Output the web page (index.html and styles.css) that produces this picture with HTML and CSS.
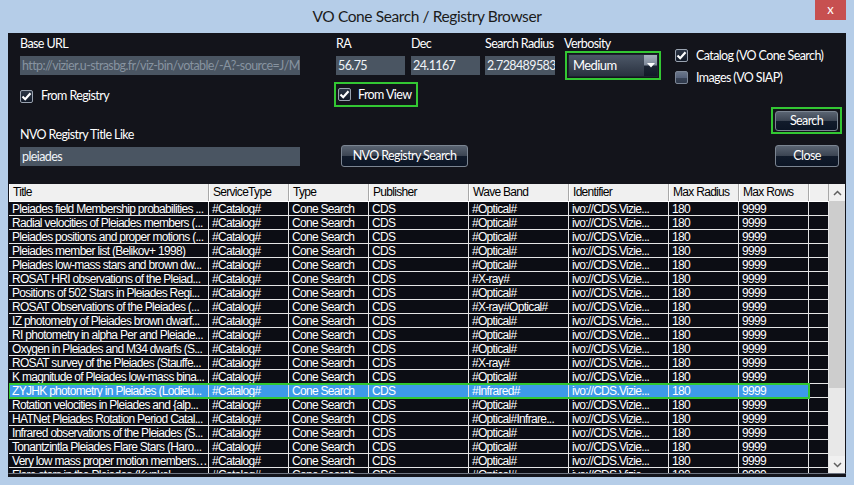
FILE: index.html
```html
<!DOCTYPE html>
<html>
<head>
<meta charset="utf-8">
<title>VO Cone Search / Registry Browser</title>
<link rel="stylesheet" href="styles.css">
</head>
<body>
<div class="window">
  <div class="titlebar">
    <div class="title">VO Cone Search / Registry Browser</div>
    <div class="close">x</div>
  </div>
  <div class="client">
    <div class="form">
      <div class="col-left">
        <div class="lbl">Base URL</div>
        <div class="input disabled">http://vizier.u-strasbg.fr/viz-bin/votable/-A?-source=J/MNRAS/433/3311</div>
        <div class="check reg-check">
          <span class="box checked"><svg width="13" height="13" viewBox="0 0 13 13"><polyline points="2.5,6.5 5.2,9.2 10.5,3.2" fill="none" stroke="#fff" stroke-width="2.2"/></svg></span>
          <span class="lbl">From Registry</span>
        </div>
        <div class="lbl title-like">NVO Registry Title Like</div>
        <div class="input">pleiades</div>
      </div>
      <div class="col-mid">
        <div class="fields">
          <div class="field f-ra"><div class="lbl">RA</div><div class="input">56.75</div></div>
          <div class="field f-dec"><div class="lbl">Dec</div><div class="input">24.1167</div></div>
          <div class="field f-sr"><div class="lbl">Search Radius</div><div class="input">2.72848958333333</div></div>
          <div class="field f-verb">
            <div class="lbl">Verbosity</div>
            <div class="hl verb-hl">
              <div class="dropdown"><span class="dd-text">Medium</span><span class="dd-arrow"><svg width="8" height="5" viewBox="0 0 8 5"><polygon points="0,0 8,0 4,4.5" fill="#fff"/></svg></span></div>
            </div>
          </div>
        </div>
        <div class="hl fv-hl">
          <span class="box checked"><svg width="13" height="13" viewBox="0 0 13 13"><polyline points="2.5,6.5 5.2,9.2 10.5,3.2" fill="none" stroke="#fff" stroke-width="2.2"/></svg></span>
          <span class="lbl">From View</span>
        </div>
        <div class="btn nvo-btn">NVO Registry Search</div>
      </div>
      <div class="col-right">
        <div class="check">
          <span class="box checked"><svg width="13" height="13" viewBox="0 0 13 13"><polyline points="2.5,6.5 5.2,9.2 10.5,3.2" fill="none" stroke="#fff" stroke-width="2.2"/></svg></span>
          <span class="lbl">Catalog (VO Cone Search)</span>
        </div>
        <div class="check img-check">
          <span class="box unchecked"></span>
          <span class="lbl">Images (VO SIAP)</span>
        </div>
        <div class="hl search-hl"><div class="btn search-btn">Search</div></div>
        <div class="btn close-btn">Close</div>
      </div>
    </div>
    <div class="grid">
      <div class="gridmain">
        <div class="hdr">
          <div class="hcell w200">Title</div>
          <div class="hcell w80">ServiceType</div>
          <div class="hcell w80">Type</div>
          <div class="hcell w100">Publisher</div>
          <div class="hcell w100">Wave Band</div>
          <div class="hcell w100">Identifier</div>
          <div class="hcell w70">Max Radius</div>
          <div class="hcell w70">Max Rows</div>
          <div class="hcell w20"></div>
        </div>
        <div class="rows">
          <div class="row"><div class="cells"><div class="cell w200">Pleiades field Membership probabilities ...</div><div class="cell w80">#Catalog#</div><div class="cell w80">Cone Search</div><div class="cell w100">CDS</div><div class="cell w100">#Optical#</div><div class="cell w100">ivo://CDS.Vizie...</div><div class="cell w70">180</div><div class="cell w70">9999</div></div><div class="cell w20"></div></div>
          <div class="row"><div class="cells"><div class="cell w200">Radial velocities of Pleiades members (...</div><div class="cell w80">#Catalog#</div><div class="cell w80">Cone Search</div><div class="cell w100">CDS</div><div class="cell w100">#Optical#</div><div class="cell w100">ivo://CDS.Vizie...</div><div class="cell w70">180</div><div class="cell w70">9999</div></div><div class="cell w20"></div></div>
          <div class="row"><div class="cells"><div class="cell w200">Pleiades positions and proper motions (...</div><div class="cell w80">#Catalog#</div><div class="cell w80">Cone Search</div><div class="cell w100">CDS</div><div class="cell w100">#Optical#</div><div class="cell w100">ivo://CDS.Vizie...</div><div class="cell w70">180</div><div class="cell w70">9999</div></div><div class="cell w20"></div></div>
          <div class="row"><div class="cells"><div class="cell w200">Pleiades member list (Belikov+ 1998)</div><div class="cell w80">#Catalog#</div><div class="cell w80">Cone Search</div><div class="cell w100">CDS</div><div class="cell w100">#Optical#</div><div class="cell w100">ivo://CDS.Vizie...</div><div class="cell w70">180</div><div class="cell w70">9999</div></div><div class="cell w20"></div></div>
          <div class="row"><div class="cells"><div class="cell w200">Pleiades low-mass stars and brown dw...</div><div class="cell w80">#Catalog#</div><div class="cell w80">Cone Search</div><div class="cell w100">CDS</div><div class="cell w100">#Optical#</div><div class="cell w100">ivo://CDS.Vizie...</div><div class="cell w70">180</div><div class="cell w70">9999</div></div><div class="cell w20"></div></div>
          <div class="row"><div class="cells"><div class="cell w200">ROSAT HRI observations of the Pleiad...</div><div class="cell w80">#Catalog#</div><div class="cell w80">Cone Search</div><div class="cell w100">CDS</div><div class="cell w100">#X-ray#</div><div class="cell w100">ivo://CDS.Vizie...</div><div class="cell w70">180</div><div class="cell w70">9999</div></div><div class="cell w20"></div></div>
          <div class="row"><div class="cells"><div class="cell w200">Positions of 502 Stars in Pleiades Regi...</div><div class="cell w80">#Catalog#</div><div class="cell w80">Cone Search</div><div class="cell w100">CDS</div><div class="cell w100">#Optical#</div><div class="cell w100">ivo://CDS.Vizie...</div><div class="cell w70">180</div><div class="cell w70">9999</div></div><div class="cell w20"></div></div>
          <div class="row"><div class="cells"><div class="cell w200">ROSAT Observations of the Pleiades (...</div><div class="cell w80">#Catalog#</div><div class="cell w80">Cone Search</div><div class="cell w100">CDS</div><div class="cell w100">#X-ray#Optical#</div><div class="cell w100">ivo://CDS.Vizie...</div><div class="cell w70">180</div><div class="cell w70">9999</div></div><div class="cell w20"></div></div>
          <div class="row"><div class="cells"><div class="cell w200">IZ photometry of Pleiades brown dwarf...</div><div class="cell w80">#Catalog#</div><div class="cell w80">Cone Search</div><div class="cell w100">CDS</div><div class="cell w100">#Optical#</div><div class="cell w100">ivo://CDS.Vizie...</div><div class="cell w70">180</div><div class="cell w70">9999</div></div><div class="cell w20"></div></div>
          <div class="row"><div class="cells"><div class="cell w200">RI photometry in alpha Per and Pleiade...</div><div class="cell w80">#Catalog#</div><div class="cell w80">Cone Search</div><div class="cell w100">CDS</div><div class="cell w100">#Optical#</div><div class="cell w100">ivo://CDS.Vizie...</div><div class="cell w70">180</div><div class="cell w70">9999</div></div><div class="cell w20"></div></div>
          <div class="row"><div class="cells"><div class="cell w200">Oxygen in Pleiades and M34 dwarfs (S...</div><div class="cell w80">#Catalog#</div><div class="cell w80">Cone Search</div><div class="cell w100">CDS</div><div class="cell w100">#Optical#</div><div class="cell w100">ivo://CDS.Vizie...</div><div class="cell w70">180</div><div class="cell w70">9999</div></div><div class="cell w20"></div></div>
          <div class="row"><div class="cells"><div class="cell w200">ROSAT survey of the Pleiades (Stauffe...</div><div class="cell w80">#Catalog#</div><div class="cell w80">Cone Search</div><div class="cell w100">CDS</div><div class="cell w100">#X-ray#</div><div class="cell w100">ivo://CDS.Vizie...</div><div class="cell w70">180</div><div class="cell w70">9999</div></div><div class="cell w20"></div></div>
          <div class="row"><div class="cells"><div class="cell w200">K magnitude of Pleiades low-mass bina...</div><div class="cell w80">#Catalog#</div><div class="cell w80">Cone Search</div><div class="cell w100">CDS</div><div class="cell w100">#Optical#</div><div class="cell w100">ivo://CDS.Vizie...</div><div class="cell w70">180</div><div class="cell w70">9999</div></div><div class="cell w20"></div></div>
          <div class="row sel"><div class="cells"><div class="cell w200">ZYJHK photometry in Pleiades (Lodieu...</div><div class="cell w80">#Catalog#</div><div class="cell w80">Cone Search</div><div class="cell w100">CDS</div><div class="cell w100">#Infrared#</div><div class="cell w100">ivo://CDS.Vizie...</div><div class="cell w70">180</div><div class="cell w70">9999</div></div><div class="cell w20"></div></div>
          <div class="row"><div class="cells"><div class="cell w200">Rotation velocities in Pleiades and {alp...</div><div class="cell w80">#Catalog#</div><div class="cell w80">Cone Search</div><div class="cell w100">CDS</div><div class="cell w100">#Optical#</div><div class="cell w100">ivo://CDS.Vizie...</div><div class="cell w70">180</div><div class="cell w70">9999</div></div><div class="cell w20"></div></div>
          <div class="row"><div class="cells"><div class="cell w200">HATNet Pleiades Rotation Period Catal...</div><div class="cell w80">#Catalog#</div><div class="cell w80">Cone Search</div><div class="cell w100">CDS</div><div class="cell w100">#Optical#Infrare...</div><div class="cell w100">ivo://CDS.Vizie...</div><div class="cell w70">180</div><div class="cell w70">9999</div></div><div class="cell w20"></div></div>
          <div class="row"><div class="cells"><div class="cell w200">Infrared observations of the Pleiades (S...</div><div class="cell w80">#Catalog#</div><div class="cell w80">Cone Search</div><div class="cell w100">CDS</div><div class="cell w100">#Optical#</div><div class="cell w100">ivo://CDS.Vizie...</div><div class="cell w70">180</div><div class="cell w70">9999</div></div><div class="cell w20"></div></div>
          <div class="row"><div class="cells"><div class="cell w200">Tonantzintla Pleiades Flare Stars (Haro...</div><div class="cell w80">#Catalog#</div><div class="cell w80">Cone Search</div><div class="cell w100">CDS</div><div class="cell w100">#Optical#</div><div class="cell w100">ivo://CDS.Vizie...</div><div class="cell w70">180</div><div class="cell w70">9999</div></div><div class="cell w20"></div></div>
          <div class="row"><div class="cells"><div class="cell w200">Very low mass proper motion members i...</div><div class="cell w80">#Catalog#</div><div class="cell w80">Cone Search</div><div class="cell w100">CDS</div><div class="cell w100">#Optical#</div><div class="cell w100">ivo://CDS.Vizie...</div><div class="cell w70">180</div><div class="cell w70">9999</div></div><div class="cell w20"></div></div>
          <div class="row"><div class="cells"><div class="cell w200">Flare stars in the Pleiades (Kunkel...</div><div class="cell w80">#Catalog#</div><div class="cell w80">Cone Search</div><div class="cell w100">CDS</div><div class="cell w100">#Optical#</div><div class="cell w100">ivo://CDS.Vizie...</div><div class="cell w70">180</div><div class="cell w70">9999</div></div><div class="cell w20"></div></div>
        </div>
      </div>
      <div class="vscroll">
        <div class="sb-btn"><svg width="9" height="6" viewBox="0 0 9 6"><polyline points="1,5 4.5,1.5 8,5" fill="none" stroke="#606060" stroke-width="1.5"/></svg></div>
        <div class="sb-thumb"></div>
        <div class="sb-track"></div>
        <div class="sb-btn"><svg width="9" height="6" viewBox="0 0 9 6"><polyline points="1,1 4.5,4.5 8,1" fill="none" stroke="#606060" stroke-width="1.5"/></svg></div>
      </div>
    </div>
  </div>
</div>
</body>
</html>
```

FILE: styles.css
```css
* { box-sizing: border-box; }
html, body { margin: 0; padding: 0; }
body {
  width: 854px;
  height: 485px;
  overflow: hidden;
  background: #b5cde8;
  font-family: "Lato", "Liberation Sans", sans-serif;
}
.window {
  width: 854px;
  height: 485px;
  background: #b5cde8;
  display: flex;
  flex-direction: column;
}
.titlebar {
  height: 33px;
  flex: none;
  display: grid;
  grid-template-columns: 1fr auto 1fr;
  align-items: start;
}
.title {
  grid-column: 2;
  font-size: 15.5px;
  letter-spacing: -0.4px;
  line-height: 32px;
  color: #1b1b1b;
}
.close {
  grid-column: 3;
  justify-self: end;
  width: 31px;
  height: 20px;
  margin-right: 8px;
  background: #c75050;
  color: #fff;
  font-size: 13px;
  line-height: 18px;
  text-align: center;
}
.client {
  margin: 0 8px;
  height: 444px;
  flex: none;
  background: #13141b;
  display: flex;
  flex-direction: column;
}
.form {
  height: 151px;
  flex: none;
  display: flex;
  padding-left: 12px;
  letter-spacing: -0.6px;
}
.lbl {
  font-size: 12.5px;
  line-height: 14px;
  height: 14px;
  color: #fff;
  white-space: nowrap;
}
.input {
  height: 19px;
  background: #4a5562;
  color: #f0f4f8;
  font-size: 12.5px;
  line-height: 19px;
  padding-left: 2px;
  overflow: hidden;
  white-space: nowrap;
}
.lbl + .input { margin-top: 5px; }
.input.disabled { color: #8793a0; }

.col-left {
  width: 280px;
  padding-top: 4px;
  display: flex;
  flex-direction: column;
}
.check {
  display: flex;
  align-items: center;
  gap: 8px;
  height: 13px;
}
.reg-check { margin-top: 14px; height: 14px; }
.col-left .title-like { margin-top: 25px; }

.box {
  width: 13px;
  height: 13px;
  flex: none;
  border-radius: 2px;
  display: block;
}
.box svg { display: block; margin: -1px; }
.box.checked {
  border: 1px solid #9aa3b0;
  background: linear-gradient(#2c3646, #121a28);
}
.box.unchecked {
  border: 1px solid #7c8696;
  background: linear-gradient(#6b778a 0%, #56627a 50%, #3a4558 51%, #2e384a 100%);
}

.col-mid {
  margin-left: 36px;
  padding-top: 4px;
  display: flex;
  flex-direction: column;
  align-items: flex-start;
}
.fields { display: flex; }
.field { display: flex; flex-direction: column; }
.f-ra { width: 69px; }
.f-dec { width: 69px; margin-left: 6px; }
.f-sr { width: 70px; margin-left: 5px; }
.f-verb { margin-left: 9px; }
.hl { border: 2px solid #33c733; }
.verb-hl {
  margin-left: 1px;
  width: 96px;
  height: 29px;
  padding: 1px;
}
.dropdown {
  height: 23px;
  display: flex;
  background: linear-gradient(#4d5868, #2a3240);
  border: 1px solid #1c2330;
}
.dd-text {
  flex: 1;
  color: #fff;
  font-size: 13px;
  line-height: 21px;
  padding-left: 4px;
}
.dd-arrow {
  width: 13px;
  display: flex;
  align-items: center;
  justify-content: center;
  background: linear-gradient(#a6b0be 0%, #7d8898 48%, #1c2534 52%, #121a28 100%);
}
.fv-hl {
  margin-left: -2px;
  margin-top: 2px;
  width: 84px;
  height: 25px;
  display: flex;
  align-items: center;
  gap: 7px;
  padding-left: 2px;
}
.btn {
  border: 1px solid #7b8592;
  border-radius: 3px;
  background: linear-gradient(#5a6472 0%, #3c4553 48%, #111b2b 52%, #0c1525 100%);
  color: #fff;
  font-size: 12.5px;
  text-align: center;
  white-space: nowrap;
}
.nvo-btn {
  margin-top: 38px;
  margin-left: 5px;
  width: 127px;
  height: 22px;
  line-height: 20px;
}
.col-right {
  margin-left: 14px;
  width: 167px;
  padding-top: 16px;
  display: flex;
  flex-direction: column;
}
.img-check { margin-top: 9px; }
.search-hl {
  align-self: flex-end;
  margin-top: 23px;
  width: 71px;
  height: 27px;
  padding: 2px 2px 1px 2px;
}
.search-btn { height: 20px; line-height: 18px; }
.close-btn {
  align-self: flex-end;
  margin-right: 3px;
  margin-top: 11px;
  width: 64px;
  height: 22px;
  line-height: 20px;
}

.grid {
  height: 290px;
  flex: none;
  display: flex;
  border-left: 1px solid #13141b;
  border-right: 1px solid #13141b;
  border-bottom: 1px solid #6f7682;
  font-family: "Liberation Sans", Arial, sans-serif;
  font-size: 12px;
  letter-spacing: -0.7px;
}
.gridmain {
  width: 820px;
  display: flex;
  flex-direction: column;
  overflow: hidden;
}
.hdr {
  display: flex;
  height: 18px;
  flex: none;
  border-bottom: 1px solid #ffffff;
  background: #f0f0f0;
}
.hcell {
  height: 17px;
  line-height: 17px;
  padding-left: 4px;
  border-right: 1px solid #a8a8a8;
  box-shadow: inset 1px 0 #ffffff;
  color: #000;
  white-space: nowrap;
  overflow: hidden;
}
.w200 { width: 200px; }
.w100 { width: 100px; }
.w80 { width: 80px; }
.w70 { width: 70px; }
.w20 { width: 20px; }
.rows { flex: 1; overflow: hidden; }
.row { display: flex; height: 14px; }
.cells { display: flex; }
.cell {
  height: 14px;
  flex: none;
  border-right: 1px solid #e6e6e6;
  border-bottom: 1px solid #e6e6e6;
  padding-top: 1px;
  line-height: 12px;
  padding-left: 3px;
  color: #fff;
  background: #0c0d14;
  overflow: hidden;
  white-space: nowrap;
  text-overflow: ellipsis;
}
.row.sel .cells {
  position: relative;
  z-index: 1;
  outline: 2px solid #31c831;
  outline-offset: -1px;
}
.row.sel .cells .cell { background: #3d9be9; }
.vscroll {
  width: 16px;
  display: flex;
  flex-direction: column;
  background: #ececec;
}
.sb-btn {
  height: 17px;
  flex: none;
  display: flex;
  align-items: center;
  justify-content: center;
  background: #f0f0f0;
}
.sb-thumb { height: 187px; flex: none; background: #cdcdcd; }
.sb-track { flex: 1; background: #e8e8e8; }
```
